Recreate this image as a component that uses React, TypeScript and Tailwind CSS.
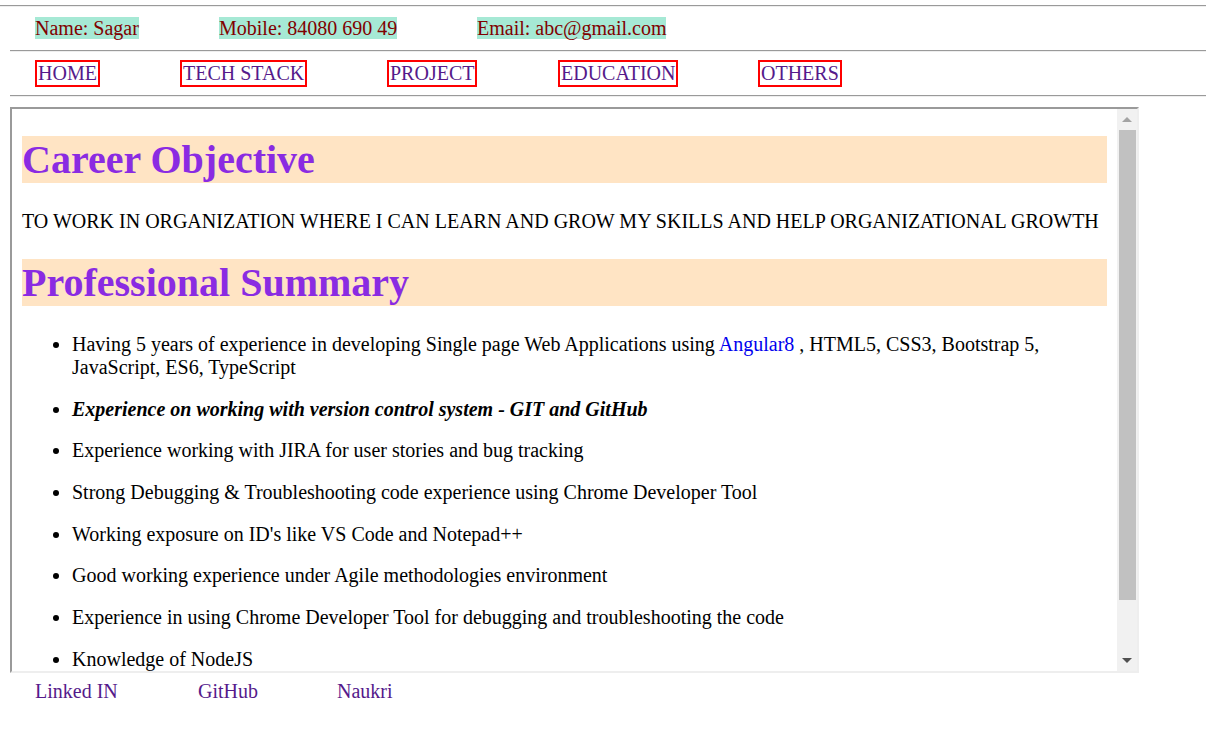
export default function App() {
  const summary: React.ReactNode[] = [
    <>
      Having 5 years of experience in developing Single page Web Applications using{" "}
      <a className="text-[#0000ee]">Angular8</a> , HTML5, CSS3, Bootstrap 5, JavaScript, ES6, TypeScript
    </>,
    <b className="italic">Experience on working with version control system - GIT and GitHub</b>,
    "Experience working with JIRA for user stories and bug tracking",
    "Strong Debugging & Troubleshooting code experience using Chrome Developer Tool",
    "Working exposure on ID's like VS Code and Notepad++",
    "Good working experience under Agile methodologies environment",
    "Experience in using Chrome Developer Tool for debugging and troubleshooting the code",
    "Knowledge of NodeJS",
    "Basic knowledge of MongoDB and Express",
  ];

  const hr = "h-[2px] border-t border-t-[#9a9a9a] border-b border-b-[#eeeeee]";

  return (
    <div className="min-h-screen bg-white text-[20px] leading-[23px] text-black [font-family:'Liberation_Serif',serif]">
      <div className="pt-[5px]">
        <div className={hr} />
      </div>

      {/* contact row */}
      <div className="mt-[10px] flex text-[#800000]">
        <div className="w-[219px] pl-[35px]">
          <span className="bg-[#a6e9d5]">Name: Sagar</span>
        </div>
        <div className="w-[258px]">
          <span className="bg-[#a6e9d5]">Mobile: 84080 690 49</span>
        </div>
        <div>
          <span className="bg-[#a6e9d5]">Email: abc@gmail.com</span>
        </div>
      </div>

      <div className={`mt-[10px] ml-[10px] ${hr}`} />

      {/* nav */}
      <nav className="mt-[8px] flex text-[#551a8b]">
        <div className="w-[180px] pl-[35px]">
          <a className="inline-block border-2 border-[#ff0000] px-px">HOME</a>
        </div>
        <div className="w-[207px]">
          <a className="inline-block border-2 border-[#ff0000] px-px">TECH STACK</a>
        </div>
        <div className="w-[171px]">
          <a className="inline-block border-2 border-[#ff0000] px-px">PROJECT</a>
        </div>
        <div className="w-[200px]">
          <a className="inline-block border-2 border-[#ff0000] px-px">EDUCATION</a>
        </div>
        <div>
          <a className="inline-block border-2 border-[#ff0000] px-px">OTHERS</a>
        </div>
      </nav>

      <div className={`mt-[8px] ml-[10px] ${hr}`} />

      {/* framed content */}
      <div className="mt-[10px] ml-[10px] flex h-[566px] w-[1129px] border-2 border-t-[#9a9a9a] border-l-[#9a9a9a] border-r-[#eeeeee] border-b-[#eeeeee]">
        <div className="h-full w-[1105px] overflow-hidden px-[10px] pt-[27px]">
          <h1 className="bg-[#ffe4c4] text-[40px] font-bold leading-[47px] text-[#8a2be2]">Career Objective</h1>
          <p className="mt-[27px]">
            TO WORK IN ORGANIZATION WHERE I CAN LEARN AND GROW MY SKILLS AND HELP ORGANIZATIONAL GROWTH
          </p>
          <h1 className="mt-[26px] bg-[#ffe4c4] text-[40px] font-bold leading-[47px] text-[#8a2be2]">
            Professional Summary
          </h1>
          <ul className="mt-[27px] list-disc pl-[50px]">
            {summary.map((item, i) => (
              <li key={i} className={i === 0 ? "" : "mt-[18.7px]"}>
                {item}
              </li>
            ))}
          </ul>
        </div>

        {/* scrollbar */}
        <div className="flex h-full w-[20px] flex-col items-center bg-[#f1f1f1]">
          <div className="flex h-[21px] w-full items-center justify-center">
            <div className="h-0 w-0 border-x-[5px] border-b-[5px] border-x-transparent border-b-[#a3a3a3]" />
          </div>
          <div className="h-[470px] w-[17px] bg-[#c1c1c1]" />
          <div className="flex-1" />
          <div className="flex h-[21px] w-full items-center justify-center">
            <div className="h-0 w-0 border-x-[5px] border-t-[5px] border-x-transparent border-t-[#505050]" />
          </div>
        </div>
      </div>

      {/* footer links */}
      <div className="mt-[7px] flex text-[#551a8b]">
        <div className="w-[198px] pl-[35px]">
          <a>Linked IN</a>
        </div>
        <div className="w-[139px]">
          <a>GitHub</a>
        </div>
        <div>
          <a>Naukri</a>
        </div>
      </div>
    </div>
  );
}
